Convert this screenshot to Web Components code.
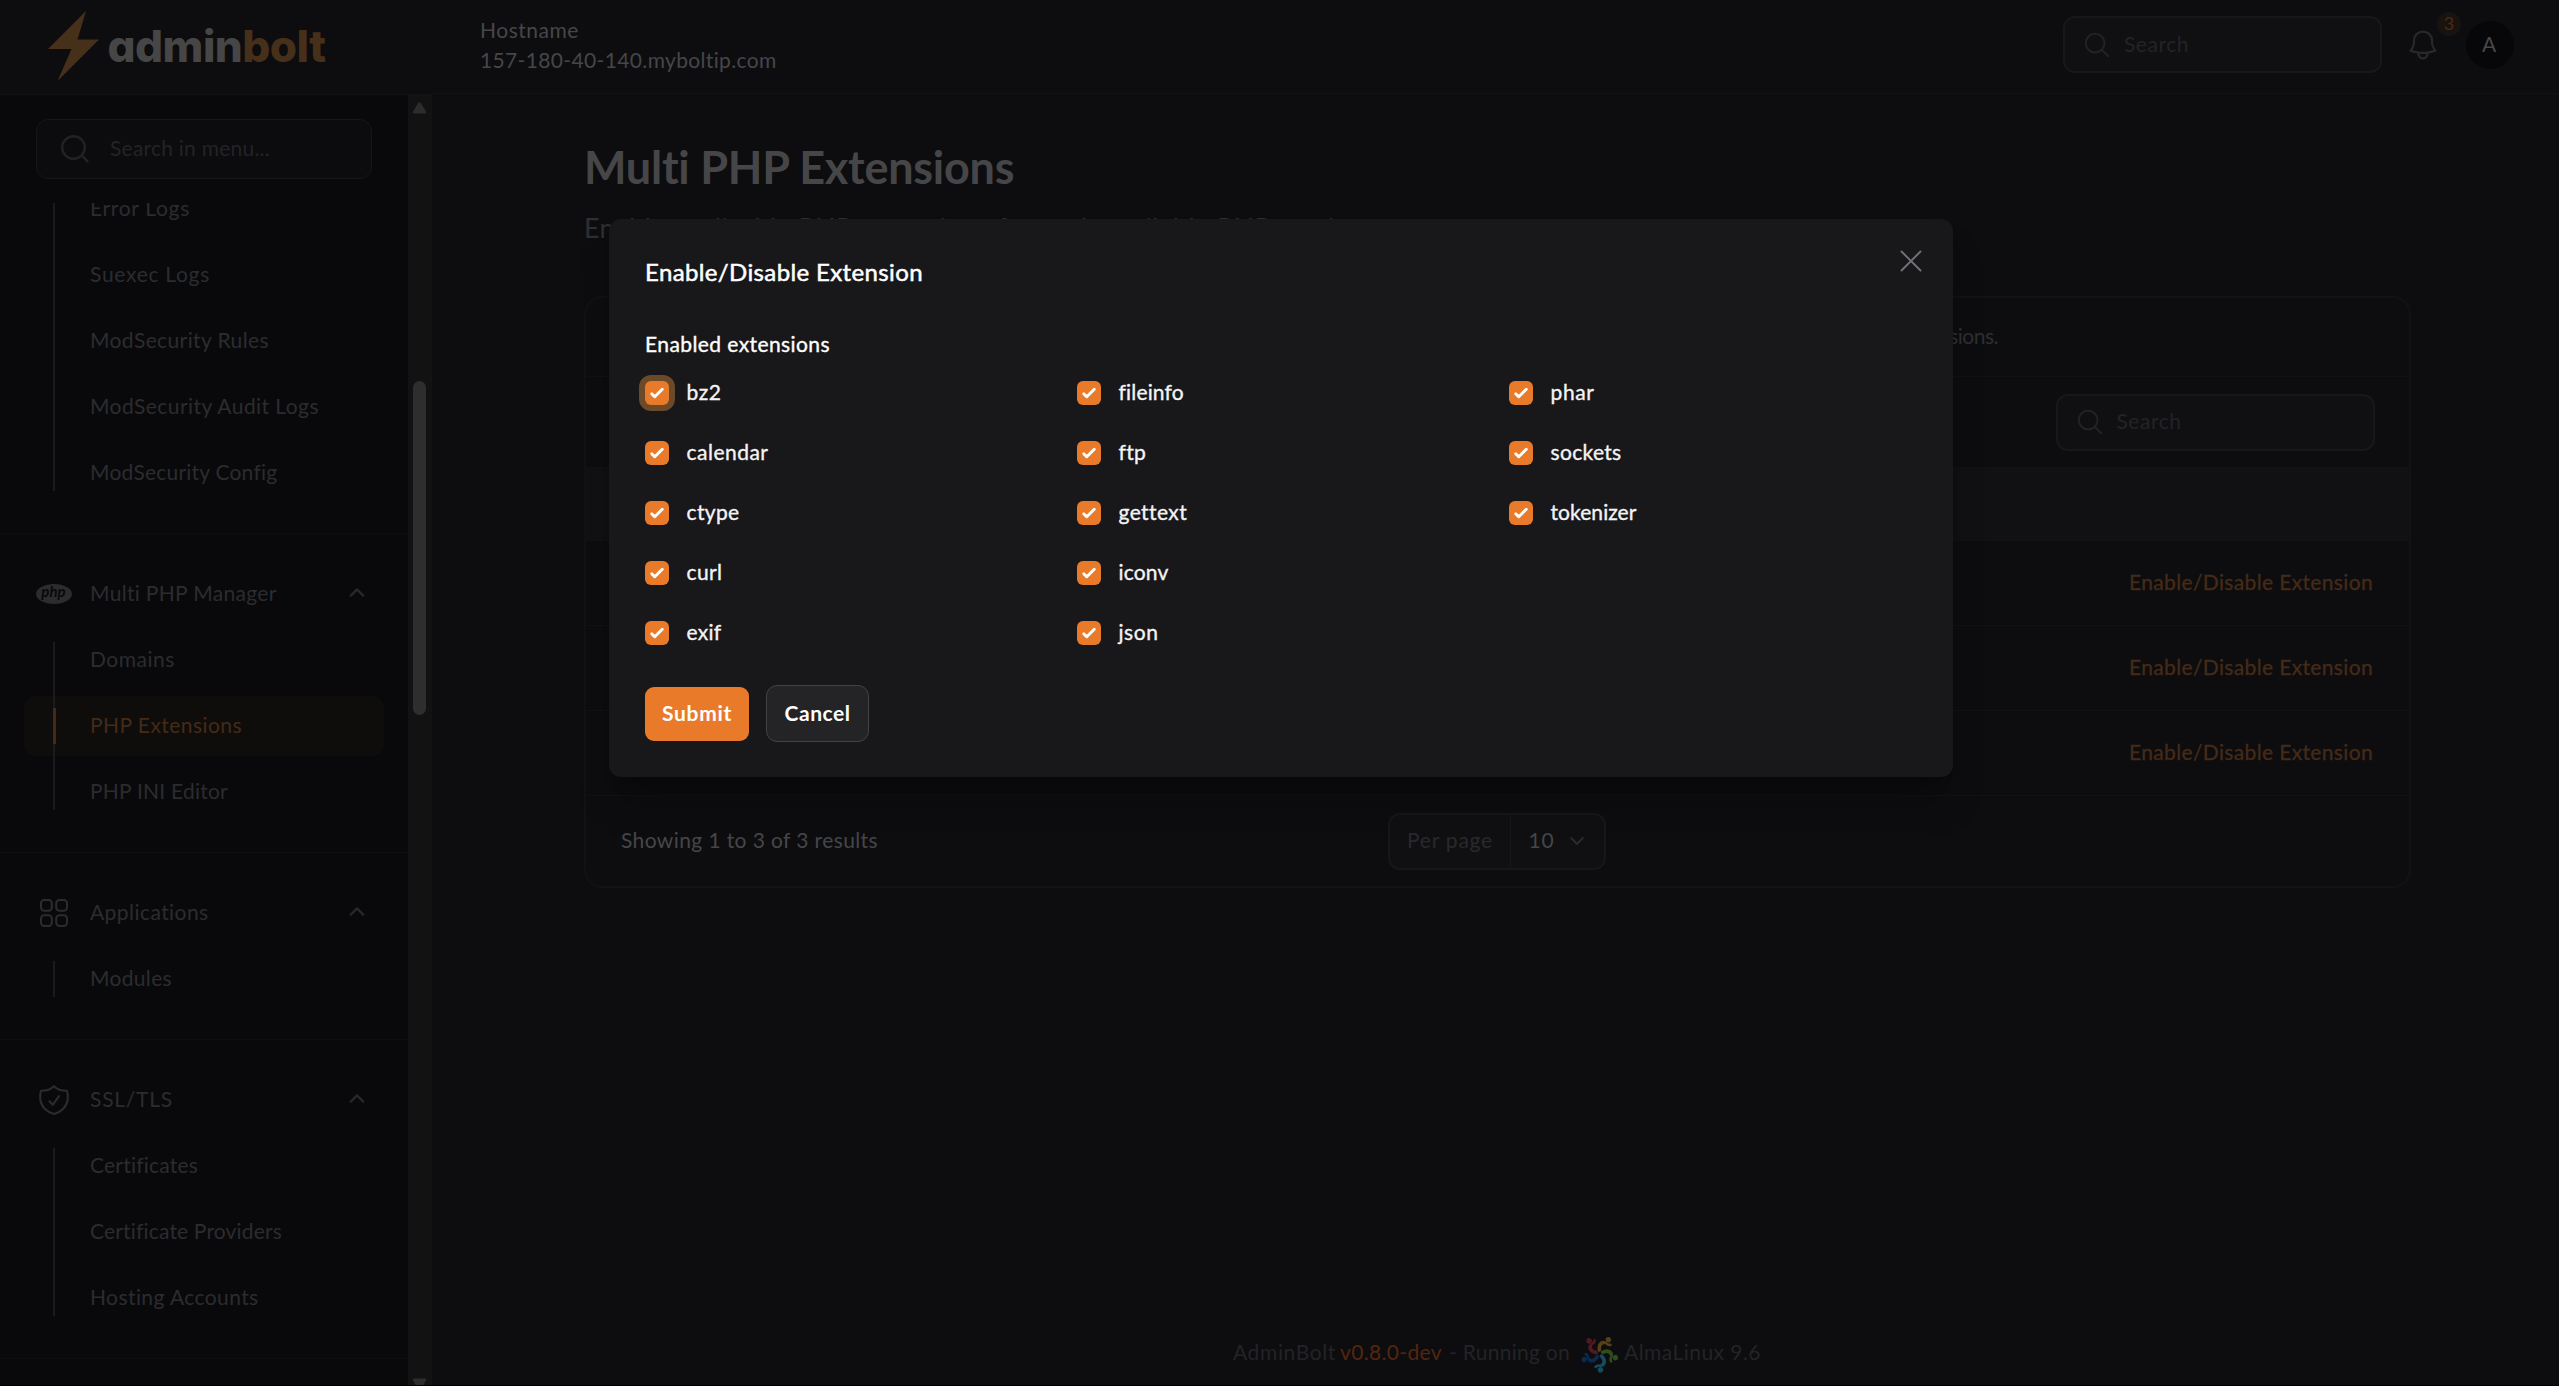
<!DOCTYPE html>
<html lang="en">
<head>
<meta charset="utf-8">
<title>Multi PHP Extensions - AdminBolt</title>
<style>
html,body{margin:0;height:100%;background:#000;overflow:hidden}
body{font-family:Lato,"Open Sans",sans-serif;font-size:21px;color:#46464a}
</style>
</head>
<body>
<admin-app></admin-app>
<script>
const define=(name,html,setup)=>{
  const tpl=document.createElement('template');
  tpl.innerHTML=html;
  customElements.define(name,class extends HTMLElement{
    connectedCallback(){
      if(this.shadowRoot)return;
      const root=this.attachShadow({mode:'open'});
      const frag=tpl.content.cloneNode(true);
      if(setup)setup(this,frag);
      root.append(frag);
      if(this.localName==='fit-text')fit(this);
    }
  });
};

/* Spreads a line of text over the width given in its w attribute. */
const fit=el=>{
  const w=parseFloat(el.getAttribute('w'));
  const span=el.shadowRoot.querySelector('span');
  const n=el.textContent.length;
  if(w&&n)span.style.letterSpacing=((w-span.getBoundingClientRect().width)/n)+'px';
};

define('fit-text',`<style>:host{display:inline-block;white-space:nowrap;line-height:1;padding-bottom:.11em;flex:none}span{display:inline-block}</style><span><slot></slot></span>`);

const stroke=(vb,d,w=1.5)=>`<svg viewBox="${vb}" fill="none" stroke="currentColor" stroke-width="${w}" stroke-linecap="round" stroke-linejoin="round">${d}</svg>`;
const petal='<circle cx="8.800" cy="-13.800" r="2.7" fill="currentColor" stroke="none"/><path d="M-.2 -3.5C-1.2 -10 2 -12.5 6.500 -10.300C8 -9.500 8.500 -8 11 -8.600"/><path d="M-.2 -3.500C-.6 -8 1 -10.500 4 -11" stroke-width="3.600"/>';
const icons={
  search:stroke('0 0 24 24','<path d="M21 21l-5.197-5.197m0 0A7.500 7.500 0 1 0 5.196 5.196a7.500 7.500 0 0 0 10.607 10.607z"/>'),
  lens:stroke('0 0 28 28','<circle cx="12.500" cy="12.500" r="11.300"/><path d="M21 20.500l5.500 5.800"/>',2.4),
  bell:stroke('0 0 24 24','<path d="M14.857 17.082a23.848 23.848 0 0 0 5.454-1.310A8.967 8.967 0 0 1 18 9.750V9A6 6 0 0 0 6 9v.750a8.967 8.967 0 0 1-2.312 6.022c1.733.640 3.560 1.085 5.455 1.310m5.714 0a24.255 24.255 0 0 1-5.714 0m5.714 0a3 3 0 1 1-5.714 0"/>'),
  up:stroke('0 0 18 12','<path d="M2 9.500l7-7 7 7"/>',2.6),
  down:stroke('0 0 18 12','<path d="M2 2.500l7 7 7-7"/>',2.6),
  close:stroke('0 0 22 22','<path d="M1.500 1.500l19 19M20.500 1.500l-19 19"/>',1.9),
  apps:stroke('0 0 28 28','<rect x="1" y="1" width="10.800" height="10.800" rx="3.200"/><rect x="16.200" y="1" width="10.800" height="10.800" rx="3.200"/><rect x="1" y="16.200" width="10.800" height="10.800" rx="3.200"/><rect x="16.200" y="16.200" width="10.800" height="10.800" rx="3.200"/>',2),
  shield:stroke('0 0 30 30','<path d="M15 1.200C11.500 4.500 7 6 2 5.800C1 8.500 1 12 1.400 15C2.500 22 8 27.500 15 29C22 27.500 27.500 22 28.600 15C29 12 29 8.500 28 5.800C23 6 18.500 4.500 15 1.200z"/><path d="M10.500 16.300l3.200 3.600 6.300-8.700"/>',2.1),
  php:'<svg viewBox="0 0 36 20"><ellipse cx="18" cy="10" rx="18" ry="10" fill="currentColor"/><text x="17.500" y="13.300" text-anchor="middle" font-family="Lato" font-weight="700" font-style="italic" font-size="15" fill="#09090b">php</text></svg>',
  bolt:'<svg viewBox="0 0 51 70"><path d="M38 0L29.500 28.500H51L9.500 70L23.500 38H0z" fill="#46301a"/></svg>',
  check:'<svg viewBox="0 0 16 16" fill="currentColor"><path d="M12.207 4.793a1 1 0 0 1 0 1.414l-5 5a1 1 0 0 1-1.414 0l-2-2a1 1 0 0 1 1.414-1.414L6.500 9.086l4.293-4.293a1 1 0 0 1 1.414 0z"/></svg>',
  alma:`<svg viewBox="-18.500 -18.500 37 37" fill="none" stroke="currentColor" stroke-width="2.600" stroke-linecap="round">${['#554018','#2f4c1b','#164a5c','#0a2a50','#501a20'].map((c,i)=>`<g color="${c}" transform="rotate(${i*72})">${petal}</g>`).join('')}</svg>`,
  tri:'<svg viewBox="0 0 15 12"><path d="M7.500 0.500C8.500 .5 9 1 9.500 2L14 9.500C14.500 11 14 11.500 13 11.500H2C1 11.500 .5 11 1 9.500L5.500 2C6 1 6.500 .5 7.500 .5z" fill="currentColor"/></svg>'
};
define('app-icon','<style>:host{display:block;flex:none}i,svg{display:block;width:100%;height:100%}svg{overflow:visible}</style><i></i>',(el,f)=>{
  f.querySelector('i').innerHTML=icons[el.getAttribute('name')];
});

define('search-box',`<style>
:host{display:flex;align-items:center;box-sizing:border-box;width:319px;height:57px;border:2px solid #18181a;border-radius:12px;background:#101012;color:#232327;padding-left:17px;gap:12px;flex:none}
app-icon{width:30px;height:30px}
:host([menu]){width:336px;height:60px;border-width:1.500px;background:#0c0c0e;border-color:#161618;padding-left:24px;gap:21px}
:host([menu]) app-icon{width:28px;height:28px}
</style><app-icon></app-icon><slot></slot>`,(el,f)=>{
  f.querySelector('app-icon').setAttribute('name',el.hasAttribute('menu')?'lens':'search');
});

define('brand-logo',`<style>
:host{display:flex;align-items:flex-start;gap:9px;padding:11px 0 0 47.500px}
app-icon{width:51px;height:70px}
fit-text{font:800 44px/1 Inter,sans-serif;font-feature-settings:"cv11";color:#464646;padding:13px 0 0}
b{color:#46301a;font-weight:800}
</style><app-icon name="bolt"></app-icon><fit-text w="218">admin<b>bolt</b></fit-text>`);

define('top-bar',`<style>
:host{display:flex;height:94px;background:#0d0d0f;flex:none;position:relative}
.left{width:432px;box-sizing:border-box;height:95px;border-bottom:1.500px solid #131315}
.rest{flex:1;box-sizing:border-box;border-bottom:1.500px solid #131315;display:flex;align-items:flex-start;padding:16px 45px 0 48px}
.host{display:flex;flex-direction:column;gap:7px;padding-top:3px;flex:1;align-items:flex-start;color:#46464a}
.bell{width:36px;height:36px;color:#28282b;margin:11px 25px 0 23px}
.bw{position:relative}
.badge{position:absolute;left:55px;top:-4px;width:24px;height:24px;border-radius:12px;background:#19130f;color:#4a2c15;font-size:18px;display:flex;align-items:center;justify-content:center}
.av{width:48px;height:48px;border-radius:50%;background:#070709;color:#48484b;display:flex;align-items:center;justify-content:center;margin-top:5px}
</style>
<div class="left"><brand-logo></brand-logo></div>
<div class="rest"><div class="host"><fit-text w="99">Hostname</fit-text><fit-text w="297">157-180-40-140.myboltip.com</fit-text></div>
<search-box><fit-text w="65">Search</fit-text></search-box>
<div class="bw"><app-icon class="bell" name="bell"></app-icon><div class="badge"><fit-text>3</fit-text></div></div>
<div class="av"><fit-text w="16">A</fit-text></div></div>`);

define('nav-item',`<style>
:host{display:flex;align-items:center;height:60px;margin:0 24px;border-radius:12px;color:#2c2c2f;box-sizing:border-box}
i{width:2px;margin:0 35px 0 29px;align-self:stretch;background:#1b1b1d;margin-top:-6px}
:host([first]) i{margin-top:12px}
:host([last]) i{margin-bottom:12px}
:host([active]){background:#0e0d0c;color:#452b17}
:host([active]) i{background:linear-gradient(#1b1b1d 18px,#0000 18px,#0000 54px,#1b1b1d 54px)}
:host([active]) i::before{content:"";display:block;width:3px;height:36px;margin-top:18px;background:#452b17}
</style><i></i><slot></slot>`);

define('nav-group',`<style>
:host{display:flex;flex-direction:column;gap:6px;padding:30px 0;border-bottom:1px solid #0e0e10;width:408px;box-sizing:border-box;flex:none}
header{display:flex;align-items:center;height:60px;padding:0 43px 0 36px;color:#2c2c2f}
.ic{width:36px;display:flex;justify-content:center;margin-right:18px}
.t{flex:1;display:flex}.up{width:16px;height:11px;margin-bottom:4px;color:#28282b}
</style><header><div class="ic"><app-icon></app-icon></div><div class="t"><slot name="title"></slot></div><app-icon class="up" name="up"></app-icon></header><slot></slot>`,(el,f)=>{
  const n=el.getAttribute('icon');
  if(!n){f.querySelector('header').remove();return}
  const ic=f.querySelector('.ic app-icon');ic.setAttribute('name',n);
  const [w,h]={php:[36,20],apps:[28,28],shield:[30,30]}[n];
  ic.style.width=w+'px';ic.style.height=h+'px';
});

define('scroll-track',`<style>
:host{display:flex;flex-direction:column;align-items:center;width:23.500px;box-sizing:border-box;background:#121212;padding:8px 5px 0 4px;color:#2c2c2c;overflow:hidden;flex:none}
app-icon{width:15px;height:12px}
.thumb{width:13px;height:334px;border-radius:7px;background:#2e2e2e;margin:267px 0 663px;flex:none}
.dn{transform:rotate(180deg)}
</style><app-icon name="tri"></app-icon><div class="thumb"></div><app-icon class="dn" name="tri"></app-icon>`);

define('side-bar',`<style>
:host{display:flex;background:#09090b;flex:none;height:1291px;overflow:hidden}
.col{width:408px;display:flex;flex-direction:column}
search-box{margin:25px 0 24px 36px}
.list{flex:1;overflow:hidden;display:flex;flex-direction:column;justify-content:flex-start}
nav-group.top{margin-top:-54px}
</style>
<div class="col"><search-box menu><fit-text w="160">Search in menu...</fit-text></search-box>
<div class="list">
<nav-group class="top">
<nav-item><fit-text w="100">Error Logs</fit-text></nav-item>
<nav-item><fit-text w="120">Suexec Logs</fit-text></nav-item>
<nav-item><fit-text w="179">ModSecurity Rules</fit-text></nav-item>
<nav-item><fit-text w="229">ModSecurity Audit Logs</fit-text></nav-item>
<nav-item last><fit-text w="187">ModSecurity Config</fit-text></nav-item></nav-group>
<nav-group icon="php"><fit-text slot="title" w="187">Multi PHP Manager</fit-text>
<nav-item first><fit-text w="85">Domains</fit-text></nav-item>
<nav-item active><fit-text w="152">PHP Extensions</fit-text></nav-item>
<nav-item last><fit-text w="138">PHP INI Editor</fit-text></nav-item></nav-group>
<nav-group icon="apps"><fit-text slot="title" w="119">Applications</fit-text>
<nav-item first last><fit-text w="82">Modules</fit-text></nav-item></nav-group>
<nav-group icon="shield"><fit-text slot="title" w="83">SSL/TLS</fit-text>
<nav-item first><fit-text w="108">Certificates</fit-text></nav-item>
<nav-item><fit-text w="192">Certificate Providers</fit-text></nav-item>
<nav-item last><fit-text w="169">Hosting Accounts</fit-text></nav-item></nav-group>
</div></div><scroll-track></scroll-track>`);

define('per-page',`<style>
:host{display:flex;box-sizing:border-box;width:218px;height:57px;border:2px solid #17171a;border-radius:12px;background:#101012}
.a{width:120.500px;box-sizing:border-box;border-right:1.500px solid #17171a;display:flex;align-items:center;padding-left:17px;color:#29292c}
.b{display:flex;align-items:center;padding-left:18px;gap:14px;color:#46464a}
app-icon{width:16px;height:10px;color:#29292c}
</style><div class="a"><fit-text w="86">Per page</fit-text></div><div class="b"><fit-text w="26">10</fit-text><app-icon name="down"></app-icon></div>`);

define('ext-table',`<style>
:host{display:flex;flex-direction:column;box-sizing:border-box;width:1827px;height:592px;border:2px solid #121214;border-radius:18px;overflow:hidden;background:#0d0d0f}
.d,.s,.h,.r,.f{box-sizing:border-box;border-bottom:1px solid #121214;display:flex;align-items:center;flex:none}
.d{height:79px;justify-content:flex-end;padding-right:411px;color:#2f2f33}
.s{height:91px;justify-content:flex-end;padding-right:34.500px}
.h{height:73px;background:#111113}
.r{height:85px;justify-content:flex-end;padding-right:36px;color:#452b17}
.r fit-text{-webkit-text-stroke:.3px}
.f{border:0;height:90px;padding-left:35px}
per-page{margin-left:510px}
</style>
<div class="d"><fit-text w="98">extensions.</fit-text></div>
<div class="s"><search-box><fit-text w="65">Search</fit-text></search-box></div>
<div class="h"></div>
<div class="r"><fit-text w="244">Enable/Disable Extension</fit-text></div>
<div class="r"><fit-text w="244">Enable/Disable Extension</fit-text></div>
<div class="r"><fit-text w="244">Enable/Disable Extension</fit-text></div>
<div class="f"><fit-text w="257">Showing 1 to 3 of 3 results</fit-text><per-page></per-page></div>`);

define('page-footer',`<style>
:host{display:flex;align-items:center;height:38px;color:#232327}
.v{color:#532610;margin:0 7px 0 4px}
app-icon{width:37px;height:37px;margin:0 6px 0 11px}
</style><fit-text w="103">AdminBolt</fit-text><fit-text class="v" w="102">v0.8.0-dev</fit-text><fit-text w="121">- Running on</fit-text><app-icon name="alma"></app-icon><fit-text w="137">AlmaLinux 9.6</fit-text>`);

define('page-content',`<style>
:host{flex:1;display:flex;flex-direction:column;background:#0d0d0f;box-sizing:border-box;padding:46px 0 0 152.500px}
.h{font-size:45px;font-weight:700;color:#464648;height:71px}
.s{font-size:27px;color:#2f2f33;height:85px}
ext-table{margin-bottom:446px}
page-footer{margin-left:649px}
</style><div class="h"><fit-text w="431">Multi PHP Extensions</fit-text></div>
<div class="s"><fit-text w="782">Enable or disable PHP extensions for each available PHP version</fit-text></div>
<ext-table></ext-table><page-footer></page-footer>`);

define('check-option',`<style>
:host{display:flex;align-items:center;height:24px;gap:17.500px;color:#f4f4f5}
.b{width:24px;height:24px;border-radius:6px;background:#e97a2a;color:#fff;flex:none}
:host([focused]) .b{box-shadow:0 0 0 6px #6b4a2a}
app-icon{width:24px;height:24px}
</style><div class="b"><app-icon name="check"></app-icon></div><slot></slot>`);

define('ui-button',`<style>
:host{display:flex;align-items:center;justify-content:center;box-sizing:border-box;width:104px;height:54px;border-radius:9px;background:#e97a2a;color:#fff;font-weight:700}
:host([gray]){width:103px;height:57px;border:1.500px solid #424246;border-radius:11px;background:#242427}
</style><slot></slot>`);

define('modal-dialog',`<style>
:host{position:absolute;left:609px;top:219px;width:1344px;height:558px;box-sizing:border-box;padding:0 31px 0 36px;background:#18181b;border-radius:12px;box-shadow:0 30px 38px -8px #0004,0 12px 15px -9px #0004;color:#fff;display:flex;flex-direction:column}
.top{display:flex;justify-content:space-between;align-items:flex-start;height:89px}
.top fit-text{font-size:24px;margin-top:41px;-webkit-text-stroke:.5px}
.top app-icon{width:22px;height:22px;margin-top:31px;color:#71717a}
.lab{height:73px;padding-top:23px;box-sizing:border-box}
.lab,.grid{-webkit-text-stroke:.35px}
.grid{display:grid;grid-template-columns:repeat(3,432px);grid-template-rows:repeat(5,24px);gap:36px 0;grid-auto-flow:column}
.btns{display:flex;align-items:center;gap:17px;margin-top:40px}
</style>
<div class="top"><fit-text w="278">Enable/Disable Extension</fit-text><app-icon name="close"></app-icon></div>
<div class="lab"><fit-text w="185">Enabled extensions</fit-text></div>
<div class="grid">
<check-option focused><fit-text w="35">bz2</fit-text></check-option>
<check-option><fit-text w="82">calendar</fit-text></check-option>
<check-option><fit-text w="53">ctype</fit-text></check-option>
<check-option><fit-text w="36">curl</fit-text></check-option>
<check-option><fit-text w="35">exif</fit-text></check-option>
<check-option><fit-text w="65">fileinfo</fit-text></check-option>
<check-option><fit-text w="27">ftp</fit-text></check-option>
<check-option><fit-text w="68">gettext</fit-text></check-option>
<check-option><fit-text w="50">iconv</fit-text></check-option>
<check-option><fit-text w="40">json</fit-text></check-option>
<check-option><fit-text w="44">phar</fit-text></check-option>
<check-option><fit-text w="71">sockets</fit-text></check-option>
<check-option><fit-text w="86">tokenizer</fit-text></check-option>
</div>
<div class="btns"><ui-button><fit-text w="70">Submit</fit-text></ui-button><ui-button gray><fit-text w="66">Cancel</fit-text></ui-button></div>`);

define('admin-app',`<style>
:host{display:flex;flex-direction:column;width:2559px;height:1385px;overflow:hidden;position:relative}
.body{display:flex;flex:1;min-height:0}
</style><top-bar></top-bar><div class="body"><side-bar></side-bar><page-content></page-content></div><modal-dialog></modal-dialog>`);
</script>
</body>
</html>
